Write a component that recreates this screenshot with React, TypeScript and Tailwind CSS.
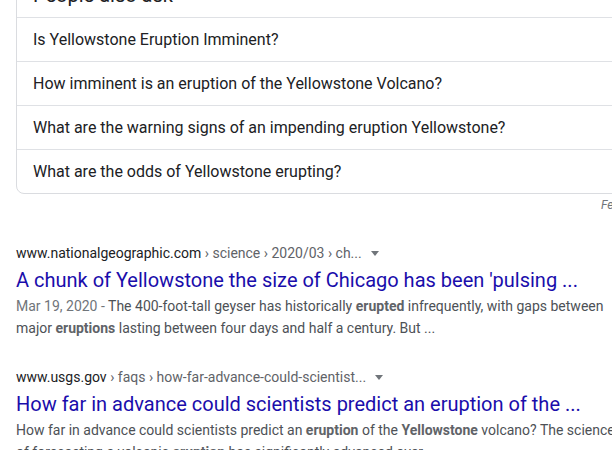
import React from 'react';

const questions = [
  'Is Yellowstone Eruption Imminent?',
  'How imminent is an eruption of the Yellowstone Volcano?',
  'What are the warning signs of an impending eruption Yellowstone?',
  'What are the odds of Yellowstone erupting?',
];

const Caret = () => (
  <span className="inline-block ml-[9px] mb-[2px] w-0 h-0 border-l-[4px] border-r-[4px] border-t-[5px] border-l-transparent border-r-transparent border-t-[#70757a] align-middle"></span>
);

const Result = ({ domain, path, title, lines }: any) => (
  <div>
    <div className="text-[14px] leading-[20px] whitespace-nowrap">
      <span className="text-[#202124]">{domain}</span>
      <span className="text-[#5f6368]">{path}</span>
      <Caret />
    </div>
    <div className="mt-[4px] text-[20px] leading-[26px] text-[#1a0dab] whitespace-nowrap">{title}</div>
    <div className="mt-[2px] text-[14px] leading-[22px] text-[#4d5156]">
      {lines.map((l: any, i: number) => (
        <div key={i} className="whitespace-nowrap">{l}</div>
      ))}
    </div>
  </div>
);

const B = ({ children }: any) => <b className="font-bold text-[#5f6368]">{children}</b>;

export default function App() {
  return (
    <div className="w-[612px] h-[450px] overflow-hidden bg-white font-['Roboto',sans-serif]">
      {/* People also ask */}
      <div className="ml-4 -mt-[20px] w-[640px] border border-[#dadce0] rounded-lg">
        <div className="pl-4 pb-[8px] text-[20px] leading-[28px] text-[#202124] whitespace-nowrap">People also ask</div>
        {questions.map((q) => (
          <div key={q} className="h-[44px] border-t border-[#dfe1e5] pl-4 flex items-center text-[16px] text-[#202124] whitespace-nowrap">
            {q}
          </div>
        ))}
      </div>
      <div className="pl-[601px] pt-[3px] text-[12px] leading-[16px] italic text-[#70757a] whitespace-nowrap">Feedback</div>

      <div className="pl-4 pt-[30px]">
        <Result
          domain="www.nationalgeographic.com"
          path=" › science › 2020/03 › ch..."
          title="A chunk of Yellowstone the size of Chicago has been 'pulsing ..."
          lines={[
            <>
              <span className="text-[#70757a]">Mar 19, 2020 - </span>The 400-foot-tall geyser has historically <B>erupted</B> infrequently, with gaps between
            </>,
            <>
              major <B>eruptions</B> lasting between four days and half a century. But ...
            </>,
          ]}
        />
        <div className="h-[28px]"></div>
        <Result
          domain="www.usgs.gov"
          path=" › faqs › how-far-advance-could-scientist..."
          title="How far in advance could scientists predict an eruption of the ..."
          lines={[
            <>
              How far in advance could scientists predict an <B>eruption</B> of the <B>Yellowstone</B> volcano? The science
            </>,
            <>
              of forecasting a volcanic <B>eruption</B> has significantly advanced over ...
            </>,
          ]}
        />
      </div>
    </div>
  );
}
